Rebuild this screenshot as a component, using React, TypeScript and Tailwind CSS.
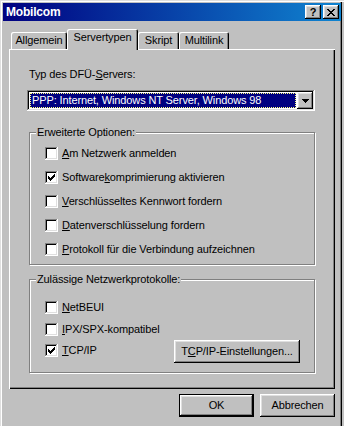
import type { ReactNode } from 'react';

const raised = "shadow-[inset_-1px_-1px_#000,inset_1px_1px_#fff,inset_-2px_-2px_#808080,inset_2px_2px_#dfdfdf]";
const sunken = "shadow-[inset_-1px_-1px_#fff,inset_1px_1px_#808080,inset_-2px_-2px_#dfdfdf,inset_2px_2px_#000]";

function Check({ checked }: { checked?: boolean }) {
    return (
        <span className={`flex h-[13px] w-[13px] shrink-0 items-center justify-center bg-white ${sunken}`}>
            {checked && (
                <svg width="7" height="7" viewBox="0 0 7 7" shapeRendering="crispEdges">
                    <path d="M0 2h1v3H0zM1 3h1v3H1zM2 4h1v3H2zM3 3h1v3H3zM4 2h1v3H4zM5 1h1v3H5zM6 0h1v3H6z" fill="#000" />
                </svg>
            )}
        </span>
    );
}

function Option({ checked, children }: { checked?: boolean; children: ReactNode }) {
    return (
        <div className="flex h-[13px] items-center gap-[4px]">
            <Check checked={checked} />
            <span className="whitespace-nowrap leading-[13px]">{children}</span>
        </div>
    );
}

function Group({ label, className, children }: { label: string; className: string; children: ReactNode }) {
    return (
        <div className={`relative ml-[2px] w-[286px] border border-[#808080] shadow-[inset_1px_1px_#fff,1px_1px_#fff] ${className}`}>
            <span className="absolute -top-[7px] left-[6px] bg-[#c0c0c0] px-[1px] leading-[13px]">{label}</span>
            {children}
        </div>
    );
}

function Tab({ label, width, active }: { label: string; width: string; active?: boolean }) {
    return (
        <div className={`${width} ${active ? 'relative z-10 -mb-[1px] h-[21px]' : 'h-[17px]'} rounded-t-[2px] bg-[#c0c0c0] pt-[2px] text-center leading-[13px] shadow-[inset_1px_1px_#fff,inset_-1px_0_#000,inset_-2px_0_#808080]`}>
            {label}
        </div>
    );
}

export default function App() {
    return (
        <div className="h-[426px] w-[344px] overflow-hidden bg-[#c0c0c0] px-[3px] pt-[3px] font-['Liberation_Sans',Arial,sans-serif] text-[11px] tracking-[-0.12px] text-black shadow-[inset_1px_1px_#dfdfdf,inset_2px_2px_#fff,inset_-2px_0_#c0c0c0,inset_-3px_0_#000,inset_-4px_0_#808080]">
            {/* title bar */}
            <div className="flex h-[18px] items-center bg-[linear-gradient(90deg,#000080,#1084d0)] pl-[3px] pr-[2px]">
                <span className="text-[12px] font-bold leading-[13px] tracking-[-0.2px] text-white">Mobilcom</span>
                <div className="ml-auto flex gap-[2px]">
                    <div className={`flex h-[14px] w-[16px] items-center justify-center bg-[#c0c0c0] pt-[1px] text-[11px] font-bold leading-none ${raised}`}>?</div>
                    <div className={`flex h-[14px] w-[16px] items-center justify-center bg-[#c0c0c0] ${raised}`}>
                        <svg width="8" height="7" viewBox="0 0 8 7" shapeRendering="crispEdges">
                            <path d="M0 0h2v1H0zM6 0h2v1H6zM1 1h2v1H1zM5 1h2v1H5zM2 2h4v1H2zM3 3h2v1H3zM2 4h4v1H2zM1 5h2v1H1zM5 5h2v1H5zM0 6h2v1H0zM6 6h2v1H6z" fill="#000" />
                        </svg>
                    </div>
                </div>
            </div>

            {/* tabs */}
            <div className="mt-[8px] flex h-[20px] items-end pl-[8px]">
                <Tab label="Allgemein" width="w-[56px]" />
                <Tab label="Servertypen" width="w-[71px]" active />
                <Tab label="Skript" width="w-[41px]" />
                <Tab label="Multilink" width="w-[50px]" />
            </div>

            {/* panel */}
            <div className="ml-[6px] h-[340px] w-[326px] pl-[18px] pt-[19px] shadow-[inset_1px_1px_#fff,inset_-1px_-1px_#000,inset_-2px_-2px_#808080]">
                <div className="pl-[2px] leading-[13px]">Typ des DFÜ-<u>S</u>ervers:</div>

                <div className={`mt-[9px] flex h-[21px] w-[288px] bg-white p-[2px] ${sunken}`}>
                    <div className="flex-1 p-[1px]">
                        <div className="flex h-full items-center whitespace-nowrap border border-dotted border-[#ffff80] bg-[#000080] pl-[1px] leading-[13px] text-white">
                            PPP: Internet, Windows NT Server, Windows 98
                        </div>
                    </div>
                    <div className={`flex h-[17px] w-[16px] items-center justify-center bg-[#c0c0c0] ${raised}`}>
                        <svg width="7" height="4" viewBox="0 0 7 4" shapeRendering="crispEdges">
                            <path d="M0 0h7v1H0zM1 1h5v1H1zM2 2h3v1H2zM3 3h1v1H3z" fill="#000" />
                        </svg>
                    </div>
                </div>

                <Group label="Erweiterte Optionen:" className="mt-[21px] h-[133px]">
                    <div className="flex flex-col gap-[11px] pl-[15px] pt-[14px]">
                        <Option><u>A</u>m Netzwerk anmelden</Option>
                        <Option checked>Software<u>k</u>omprimierung aktivieren</Option>
                        <Option><u>V</u>erschlüsseltes Kennwort fordern</Option>
                        <Option><u>D</u>atenverschlüsselung fordern</Option>
                        <Option><u>P</u>rotokoll für die Verbindung aufzeichnen</Option>
                    </div>
                </Group>

                <Group label="Zulässige Netzwerkprotokolle:" className="mt-[14px] h-[94px]">
                    <div className="flex flex-col pl-[15px] pr-[14px] pt-[21px]">
                        <Option><u>N</u>etBEUI</Option>
                        <div className="mt-[9px]">
                            <Option><u>I</u>PX/SPX-kompatibel</Option>
                        </div>
                        <div className="mt-[4px] flex items-start">
                            <div className="mt-[4px]">
                                <Option checked><u>T</u>CP/IP</Option>
                            </div>
                            <div className={`ml-auto flex h-[23px] w-[126px] items-center justify-center bg-[#c0c0c0] leading-[13px] ${raised}`}>
                                T<u>C</u>P/IP-Einstellungen...
                            </div>
                        </div>
                    </div>
                </Group>
            </div>

            {/* buttons */}
            <div className="ml-[6px] mt-[5px] flex w-[326px] justify-end gap-[6px]">
                <div className={`flex h-[23px] w-[75px] items-center justify-center border border-black bg-[#c0c0c0] leading-[13px] ${raised}`}>OK</div>
                <div className={`flex h-[23px] w-[75px] items-center justify-center bg-[#c0c0c0] leading-[13px] ${raised}`}>Abbrechen</div>
            </div>
        </div>
    );
}
